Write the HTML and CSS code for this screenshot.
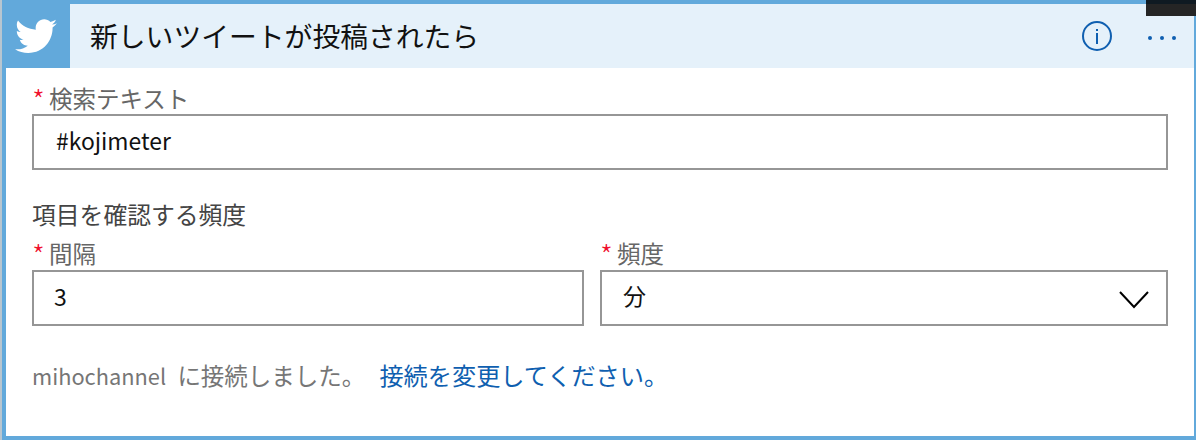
FILE: index.html
```html
<!DOCTYPE html>
<html lang="ja">
<head>
<meta charset="utf-8">
<title>新しいツイートが投稿されたら</title>
<link rel="stylesheet" href="styles.css">
</head>
<body>
<div class="corner"></div>
<section class="card">
  <header class="head">
    <div class="logo">
      <svg width="42" height="34" viewBox="0 0 24 19.500"><path fill="#fff" d="M24 2.400c-.9.4-1.800.7-2.800.8 1-.6 1.800-1.600 2.200-2.700-1 .6-2 1-3.100 1.200C19.300.7 18 .1 16.700.1c-2.700 0-4.900 2.200-4.900 4.900 0 .4 0 .8.100 1.100C7.700 5.900 4.100 4 1.700.9 1.200 1.600 1 2.500 1 3.400c0 1.700.9 3.200 2.200 4.100-.8 0-1.600-.2-2.200-.6v.1c0 2.400 1.700 4.400 3.900 4.800-.4.1-.8.2-1.300.2-.3 0-.6 0-.9-.1.6 2 2.400 3.400 4.600 3.400-1.700 1.300-3.800 2.100-6.100 2.100-.4 0-.8 0-1.200-.1 2.200 1.400 4.800 2.200 7.500 2.200 9.100 0 14-7.500 14-14v-.6c1-.7 1.800-1.600 2.500-2.500z"/></svg>
    </div>
    <h1 class="title">新しいツイートが投稿されたら</h1>
    <div class="actions">
      <svg class="info" width="32" height="32" viewBox="0 0 32 32"><circle cx="16" cy="16" r="14" fill="none" stroke="#0f5fb0" stroke-width="2"/><rect x="15" y="13" width="2" height="11" fill="#0f5fb0"/><rect x="15" y="9" width="2" height="2" fill="#0f5fb0"/></svg>
      <div class="dots"><i></i><i></i><i></i></div>
    </div>
  </header>
  <div class="body">
    <div class="field">
      <label class="label"><span class="req">*</span>検索テキスト</label>
      <div class="box"><span class="latin">#kojimeter</span></div>
    </div>
    <h2 class="group">項目を確認する頻度</h2>
    <div class="row">
      <div class="field left">
        <label class="label"><span class="req">*</span>間隔</label>
        <div class="box">3</div>
      </div>
      <div class="field right">
        <label class="label"><span class="req">*</span>頻度</label>
        <div class="box select">分
          <svg width="30" height="18" viewBox="0 0 30 18"><path d="M1 1l14 15L29 1" fill="none" stroke="#000" stroke-width="2"/></svg>
        </div>
      </div>
    </div>
    <p class="conn"><span class="plain"><span class="name">mihochannel</span> <span class="ni">に接続しました。</span></span><a href="#">接続を変更してください。</a></p>
  </div>
</section>
</body>
</html>
```

FILE: styles.css
```css
* { box-sizing: border-box; }
html, body { margin: 0; padding: 0; background: #fff; }
body {
  width: 1196px;
  height: 440px;
  overflow: hidden;
  position: relative;
  font-family: "Noto Sans CJK JP", "Noto Sans", sans-serif;
}
.corner {
  position: absolute;
  top: 0;
  right: 0;
  width: 50px;
  height: 16px;
  background: #252525;
  border-top: 4px solid #0f1a22;
  z-index: 2;
}
.card {
  height: 440px;
  margin-left: 2px;
  border: 4px solid #62a9db;
  border-right-width: 2px;
  display: flex;
  flex-direction: column;
  box-shadow: -2px 0 0 #b8c6d0;
}
.head {
  height: 64px;
  margin-left: -4px;
  flex: none;
  display: flex;
  align-items: center;
  background: #e5f1fa;
}
.logo {
  width: 68px;
  height: 64px;
  background: #62a9db;
  display: flex;
  align-items: center;
  justify-content: center;
}
.title {
  margin: 0 0 0 20px;
  font-size: 27.800px;
  font-weight: 400;
  color: #111;
  line-height: 1;
}
.actions {
  margin-left: auto;
  display: flex;
  align-items: center;
  gap: 35px;
  padding-right: 18px;
}
.dots { display: flex; gap: 8px; margin-top: 4px; }
.dots i { width: 4px; height: 4px; border-radius: 50%; background: #0f5fb0; }
.body { padding: 16px 26px 0 26px; }
.label {
  display: block;
  height: 28px;
  margin-bottom: 2px;
  font-size: 23.500px;
  line-height: 28px;
  color: #666;
  white-space: nowrap;
}
.row .label { margin-bottom: 3px; }
.req {
  display: inline-block;
  width: 17px;
  height: 20px;
  font-size: 29px;
  font-weight: 300;
  line-height: 30px;
  vertical-align: top;
  color: #f0102c;
}
.box {
  height: 56px;
  border: 2px solid #969696;
  padding-left: 22px;
  font-size: 23px;
  line-height: 48px;
  color: #111;
}
.left .box { padding-left: 20px; }
.latin { font-size: 22.900px; }
.group {
  margin: 27px 0 0;
  font-size: 23.800px;
  font-weight: 400;
  line-height: 34px;
  color: #444;
}
.row { display: flex; gap: 16px; margin-top: 8px; }
.left { width: 552px; }
.right { flex: 1; }
.select { display: flex; align-items: center; justify-content: space-between; padding: 0 17px 6px 21px; }
.select svg { margin-top: 9px; }
.conn { margin: 31px 0 0; font-size: 23.500px; line-height: 36px; white-space: nowrap; }
.plain { color: #767676; }
.name { font-size: 21.800px; }
.ni { margin-left: 6px; }
.conn a { color: #0f5fb0; text-decoration: none; margin-left: 14px; font-size: 24.200px; }
```
